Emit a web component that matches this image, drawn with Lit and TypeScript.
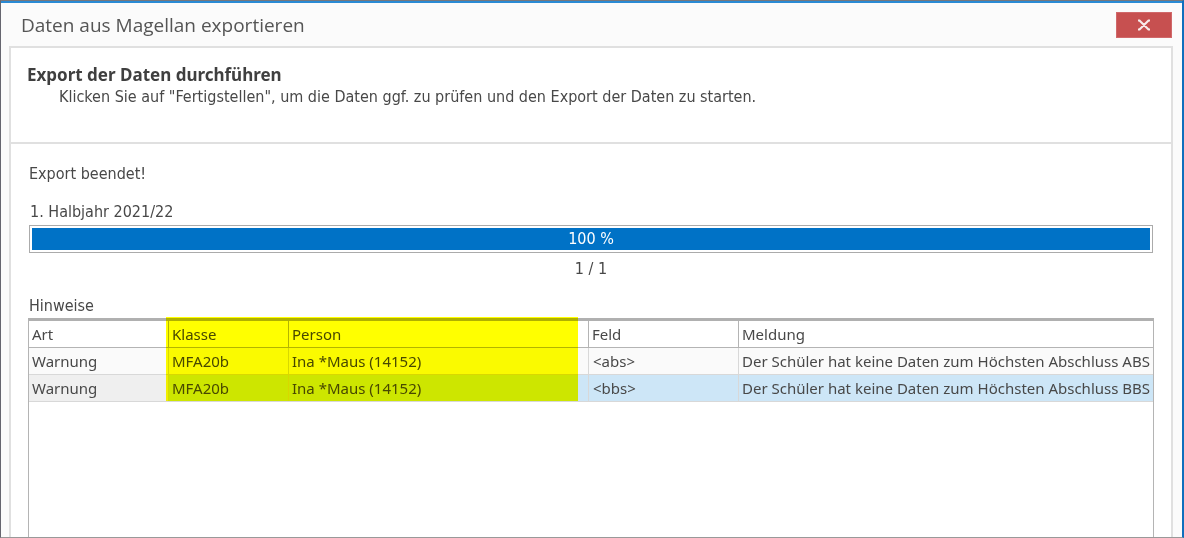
import { LitElement, html, css } from "lit";
import { customElement, state } from "lit/decorators.js";
import { classMap } from "lit/directives/class-map.js";

interface Hint {
  kind: string;
  group: string;
  person: string;
  field: string;
  message: string;
}

@customElement("app-root")
export class AppRoot extends LitElement {
  static styles = css`
    :host {
      display: block;
      font-family: Tahoma, "DejaVu Sans Condensed", "Noto Sans", sans-serif;
      font-size: 16px;
      line-height: 22px;
      color: #484848;
    }
    * {
      box-sizing: border-box;
    }
    .window {
      display: flex;
      flex-direction: column;
      height: 100vh;
      background: #fbfbfb;
      border-top: 1px solid #77777c;
      border-left: 1px solid #66666f;
      border-bottom: 1px solid #999999;
      border-right: 2px solid #0f6fbd;
      overflow: hidden;
    }
    .titlebar {
      display: flex;
      align-items: center;
      justify-content: space-between;
      height: 45px;
      flex: none;
      border-top: 2px solid #2a8ad4;
      padding: 0 10px 0 20px;
    }
    .title {
      margin: 0;
      font-family: "Open Sans", "Noto Sans", sans-serif;
      font-size: 19px;
      font-weight: 400;
      line-height: 26px;
      color: #555555;
    }
    .close {
      display: flex;
      align-items: center;
      justify-content: center;
      width: 56px;
      height: 26px;
      padding: 0;
      border: 1px solid #d0686a;
      background: #c75050;
    }
    .panel {
      display: flex;
      flex-direction: column;
      flex: 1;
      min-height: 0;
      margin: 0 9px 0 8px;
      background: #ffffff;
      border: 2px solid #e0e0e0;
      border-bottom: 0;
    }
    .intro {
      flex: none;
      height: 96px;
      padding: 16px 16px 0;
      border-bottom: 2px solid #e0e0e0;
    }
    .heading {
      margin: 0;
      font-family: "Noto Sans", "Open Sans", sans-serif;
      font-size: 17px;
      line-height: 22px;
      font-weight: 700;
      color: #3f3f3f;
    }
    .text {
      margin: 0 0 0 32px;
    }
    .content {
      display: flex;
      flex-direction: column;
      flex: 1;
      min-height: 0;
      padding: 19px 17px 0;
    }
    .status {
      margin: 0 0 16px 1px;
    }
    .term {
      margin: 0 0 2px 2px;
    }
    .bar {
      position: relative;
      height: 28px;
      margin: 0 1px;
      padding: 2px;
      border: 1px solid #ababab;
      background: #ffffff;
      flex: none;
    }
    .fill {
      height: 100%;
      background: #0072c6;
    }
    .percent {
      position: absolute;
      inset: 0;
      line-height: 26px;
      text-align: center;
      color: #ffffff;
    }
    .count {
      margin: 5px 0 15px;
      text-align: center;
    }
    .caption {
      margin: 0 0 1px 1px;
    }
    .grid {
      position: relative;
      flex: 1;
      min-height: 0;
      border: 1px solid #b4b4b4;
      border-top: 3px solid #b0b0b0;
      border-bottom: 0;
    }
    .table {
      width: 100%;
      table-layout: fixed;
      border-collapse: separate;
      border-spacing: 0;
      font-family: "Noto Sans", "Open Sans", sans-serif;
      font-size: 15px;
    }
    .table th,
    .table td {
      height: 27px;
      padding: 0 0 0 3px;
      overflow: hidden;
      white-space: nowrap;
      text-align: left;
      font-weight: 400;
      line-height: 22px;
      border-right: 1px solid #d8d8d8;
      border-bottom: 1px solid #d8d8d8;
    }
    .table th {
      border-color: #b4b4b4;
    }
    .table th:last-child,
    .table td:last-child {
      border-right: 0;
    }
    .table td {
      background: #fafafa;
    }
    .table .selected td {
      background: #cde6f7;
    }
    .table .selected td:first-child {
      background: #efefef;
    }
    .table .field {
      padding-left: 4px;
    }
    .kind-col {
      width: 140px;
    }
    .group-col {
      width: 120px;
    }
    .person-col {
      width: 300px;
    }
    .field-col {
      width: 150px;
    }
    .marker {
      position: absolute;
      top: -4px;
      left: 137px;
      width: 412px;
      height: 84px;
      background: #ffff00;
      mix-blend-mode: multiply;
      pointer-events: none;
    }
  `;

  @state() private progress = 100;
  @state() private selected = 1;

  private hints: Hint[] = [
    {
      kind: "Warnung",
      group: "MFA20b",
      person: "Ina *Maus (14152)",
      field: "<abs>",
      message: "Der Schüler hat keine Daten zum Höchsten Abschluss ABS",
    },
    {
      kind: "Warnung",
      group: "MFA20b",
      person: "Ina *Maus (14152)",
      field: "<bbs>",
      message: "Der Schüler hat keine Daten zum Höchsten Abschluss BBS",
    },
  ];

  render() {
    return html`
      <main class="window">
        <header class="titlebar">
          <h1 class="title">Daten aus Magellan exportieren</h1>
          <button class="close" type="button" aria-label="Schließen">
            <svg width="14" height="12" viewBox="0 0 14 12" aria-hidden="true">
              <path
                d="M1 1.5 H2.5 L11.5 10.5 H13 M13 1.5 H11.5 L2.5 10.5 H1"
                fill="none"
                stroke="#f8ecec"
                stroke-width="2.2"
              />
            </svg>
          </button>
        </header>
        <section class="panel">
          <div class="intro">
            <h2 class="heading">Export der Daten durchführen</h2>
            <p class="text">
              Klicken Sie auf "Fertigstellen", um die Daten ggf. zu prüfen und den Export der Daten zu starten.
            </p>
          </div>
          <div class="content">
            <p class="status">Export beendet!</p>
            <p class="term" id="term">1. Halbjahr 2021/22</p>
            <div
              class="bar"
              role="progressbar"
              aria-labelledby="term"
              aria-valuemin="0"
              aria-valuemax="100"
              aria-valuenow=${this.progress}
            >
              <div class="fill" style="width: ${this.progress}%"></div>
              <span class="percent">${this.progress} %</span>
            </div>
            <p class="count">1 / 1</p>
            <p class="caption" id="hints">Hinweise</p>
            <div class="grid">
              <table class="table" aria-labelledby="hints">
                <colgroup>
                  <col class="kind-col" />
                  <col class="group-col" />
                  <col class="person-col" />
                  <col class="field-col" />
                  <col />
                </colgroup>
                <thead>
                  <tr>
                    <th scope="col">Art</th>
                    <th scope="col">Klasse</th>
                    <th scope="col">Person</th>
                    <th scope="col">Feld</th>
                    <th scope="col">Meldung</th>
                  </tr>
                </thead>
                <tbody>
                  ${this.hints.map(
                    (hint, index) => html`
                      <tr
                        class=${classMap({ selected: index === this.selected })}
                        @click=${() => (this.selected = index)}
                      >
                        <td>${hint.kind}</td>
                        <td>${hint.group}</td>
                        <td>${hint.person}</td>
                        <td class="field">${hint.field}</td>
                        <td>${hint.message}</td>
                      </tr>
                    `
                  )}
                </tbody>
              </table>
              <div class="marker"></div>
            </div>
          </div>
        </section>
      </main>
    `;
  }
}
